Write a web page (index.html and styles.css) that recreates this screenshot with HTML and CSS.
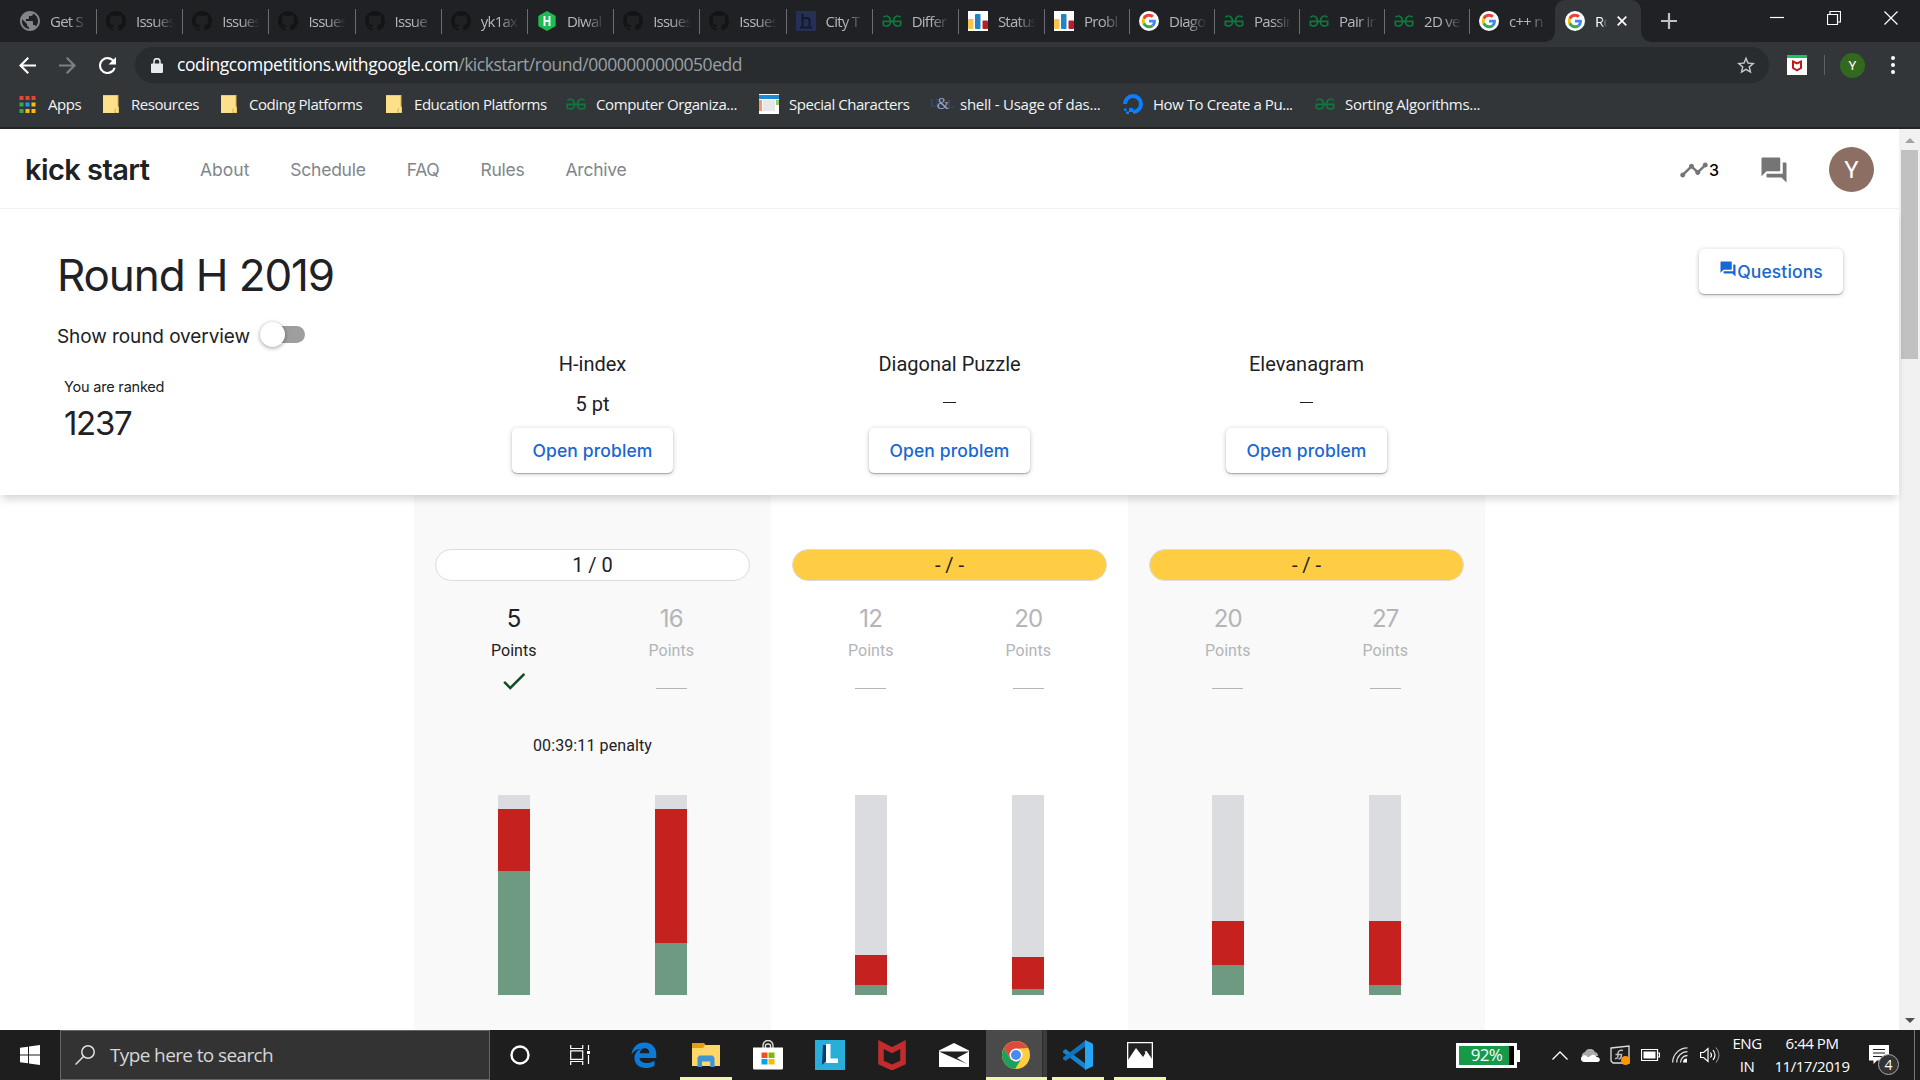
FILE: index.html
```html
<!DOCTYPE html>
<html lang="en">
<head>
<meta charset="utf-8">
<title>Kick Start - Round H 2019</title>
<link rel="stylesheet" href="styles.css">
</head>
<body>
<svg class="defs" aria-hidden="true">
  <symbol id="github" viewBox="0 0 16 16"><path d="M8 0C3.58 0 0 3.58 0 8c0 3.54 2.29 6.53 5.47 7.59.4.07.55-.17.55-.38 0-.19-.01-.82-.01-1.49-2.01.37-2.53-.49-2.69-.94-.09-.23-.48-.94-.82-1.13-.28-.15-.68-.52-.01-.53.63-.01 1.08.58 1.23.82.72 1.21 1.87.87 2.33.66.07-.52.28-.87.51-1.07-1.78-.2-3.64-.89-3.64-3.95 0-.87.31-1.59.82-2.15-.08-.2-.36-1.02.08-2.12 0 0 .67-.21 2.2.82.64-.18 1.32-.27 2-.27s1.36.09 2 .27c1.53-1.04 2.2-.82 2.2-.82.44 1.1.16 1.92.08 2.12.51.56.82 1.27.82 2.15 0 3.07-1.87 3.75-3.65 3.95.29.25.54.73.54 1.48 0 1.07-.01 1.93-.01 2.2 0 .21.15.46.55.38A8.01 8.01 0 0 0 16 8c0-4.42-3.58-8-8-8z" fill="#141414"/></symbol>
  <symbol id="globe" viewBox="2 2 20 20"><path d="M12 2C6.48 2 2 6.48 2 12s4.48 10 10 10 10-4.48 10-10S17.52 2 12 2zm-1 17.93c-3.95-.49-7-3.85-7-7.93 0-.62.08-1.21.21-1.79L9 15v1c0 1.1.9 2 2 2v1.930zm6.900-2.540c-.26-.81-1-1.390-1.900-1.390h-1v-3c0-.55-.45-1-1-1H8v-2h2c.55 0 1-.45 1-1V7h2c1.100 0 2-.9 2-2v-.41c2.930 1.190 5 4.060 5 7.410 0 2.080-.8 3.970-2.100 5.390z" fill="#80868b"/></symbol>
  <symbol id="google" viewBox="0 0 20 20"><circle cx="10" cy="10" r="10" fill="#fff"/><g transform="translate(2.800 2.800) scale(.3)"><path fill="#EA4335" d="M24 9.500c3.540 0 6.710 1.220 9.210 3.600l6.850-6.850C35.900 2.380 30.470 0 24 0 14.620 0 6.510 5.380 2.560 13.220l7.980 6.190C12.430 13.720 17.740 9.500 24 9.500z"/><path fill="#4285F4" d="M46.980 24.550c0-1.570-.15-3.090-.38-4.550H24v9.020h12.940c-.58 2.960-2.260 5.480-4.780 7.180l7.730 6c4.510-4.180 7.090-10.360 7.090-17.650z"/><path fill="#FBBC05" d="M10.530 28.590c-.48-1.450-.76-2.990-.76-4.590s.27-3.140.76-4.590l-7.980-6.190C.92 16.460 0 20.120 0 24c0 3.880.92 7.540 2.560 10.780l7.970-6.190z"/><path fill="#34A853" d="M24 48c6.480 0 11.930-2.130 15.890-5.810l-7.730-6c-2.150 1.450-4.920 2.300-8.160 2.300-6.260 0-11.570-4.220-13.470-9.910l-7.980 6.190C6.510 42.620 14.620 48 24 48z"/></g></symbol>
  <symbol id="gfg" viewBox="0 0 20 20"><g fill="none" stroke="#10763f" stroke-width="1.700"><path d="M18.500 6.500C16.500 4 12 4.500 11.500 9.800s4 6.200 7.200 4.200V10.300H9.800"/><path d="M1.500 6.500C3.500 4 8 4.500 8.500 9.800S4.500 16 1.300 14V10.300h9"/></g></symbol>
  <symbol id="cf" viewBox="0 0 20 20"><path fill="#fff" d="M0 0h20v20H0z"/><rect x="0" y="8" width="5.500" height="10" rx="1" fill="#f4c64e"/><rect x="7" y="3" width="5.500" height="15" rx="1" fill="#2284c6"/><rect x="14.500" y="9.500" width="5.500" height="8.500" rx="1" fill="#b7202a"/></symbol>
  <symbol id="hr" viewBox="0 0 20 20"><path fill="#1ebb52" d="M10 0l8 4.500c.5.300.7.800.7 1.300v8.400c0 .5-.2 1-.7 1.300L10 20l-8-4.500c-.5-.3-.7-.8-.7-1.300V5.800c0-.5.200-1 .7-1.300z"/><path d="M7.500 5v10M12.500 5v10M7.500 10h5" stroke="#fff" stroke-width="1.900" fill="none"/></symbol>
  <symbol id="folder" viewBox="0 0 16 18"><path d="M0 0h15v12h1v6H0z" fill="#ffe08a"/><path d="M0 0h15v12h1v6h-4v-4h1.500" fill="none" stroke="#d9b44f"/></symbol>
  <symbol id="forum" viewBox="0 0 24 24"><path d="M21 6h-2v9H6v2c0 .55.450 1 1 1h11l4 4V7c0-.55-.45-1-1-1zm-4 6V3c0-.55-.45-1-1-1H3c-.55 0-1 .45-1 1v14l4-4h10c.55 0 1-.45 1-1z" fill="currentColor"/></symbol>
</svg>

<header class="tabstrip">
  <div class="tab first"><svg><use href="#globe"/></svg><span>Get S</span></div>
  <div class="tab"><svg><use href="#github"/></svg><span>Issues</span></div>
  <div class="tab"><svg><use href="#github"/></svg><span>Issues</span></div>
  <div class="tab"><svg><use href="#github"/></svg><span>Issues</span></div>
  <div class="tab"><svg><use href="#github"/></svg><span>Issue</span></div>
  <div class="tab"><svg><use href="#github"/></svg><span>yk1ax</span></div>
  <div class="tab"><svg><use href="#hr"/></svg><span>Diwal</span></div>
  <div class="tab"><svg><use href="#github"/></svg><span>Issues</span></div>
  <div class="tab"><svg><use href="#github"/></svg><span>Issues</span></div>
  <div class="tab"><svg viewBox="0 0 20 20"><path fill="#263056" d="M0 0h20v20H0z"/><path d="M6.500 3v12M6.500 9q0-2 3.500-2t3.500 2v6M4 16.500h12" stroke="#12182d" stroke-width="2" fill="none"/></svg><span>City T</span></div>
  <div class="tab"><svg><use href="#gfg"/></svg><span>Differ</span></div>
  <div class="tab"><svg><use href="#cf"/></svg><span>Status</span></div>
  <div class="tab late"><svg><use href="#cf"/></svg><span>Probl</span></div>
  <div class="tab late"><svg><use href="#google"/></svg><span>Diago</span></div>
  <div class="tab late"><svg><use href="#gfg"/></svg><span>Passin</span></div>
  <div class="tab late"><svg><use href="#gfg"/></svg><span>Pair in</span></div>
  <div class="tab late"><svg><use href="#gfg"/></svg><span>2D ve</span></div>
  <div class="tab late last"><svg><use href="#google"/></svg><span>c++ n</span></div>
  <div class="tab active"><svg><use href="#google"/></svg><span>Ro</span><svg class="close" viewBox="0 0 10 10"><path d="M.7.700l8.600 8.600M9.300.700L.7 9.300" stroke="#fff" stroke-width="1.700"/></svg></div>
  <svg class="newtab" viewBox="0 0 16 16"><path d="M8 0v16M0 8h16" stroke="#bdc1c6" stroke-width="2.200"/></svg>
  <div class="winctl">
    <svg viewBox="0 0 14 14"><path d="M0 6.500h14" stroke="#fff" stroke-width="1.200"/></svg>
    <svg viewBox="0 0 14 14"><path d="M.5 3.500h10v10H.5zM3 3.500V.5h10.500V11h-3" stroke="#fff" fill="none" stroke-width="1.200"/></svg>
    <svg viewBox="0 0 14 14"><path d="M.5.500l13 13M13.500.500l-13 13" stroke="#fff" stroke-width="1.200"/></svg>
  </div>
</header>

<div class="toolbar">
  <svg class="nav-ic" viewBox="4 4 16 16"><path fill="#fff" d="M20 11H7.830l5.590-5.590L12 4l-8 8 8 8 1.410-1.410L7.830 13H20z"/></svg>
  <svg class="nav-ic" viewBox="4 4 16 16"><path fill="#7d8083" d="M12 4l-1.410 1.410L16.170 11H4v2h12.170l-5.580 5.590L12 20l8-8z"/></svg>
  <svg class="nav-ic" viewBox="4 4 16 16"><path fill="#fff" d="M17.650 6.350A7.960 7.960 0 0 0 12 4a8 8 0 1 0 7.730 10h-2.080A6 6 0 1 1 12 6c1.660 0 3.140.69 4.220 1.780L13 11h7V4z"/></svg>
  <div class="omnibox">
    <svg class="lock" viewBox="0 0 12 15"><path fill="#e8eaed" d="M1 5.500h10a1 1 0 0 1 1 1V14a1 1 0 0 1-1 1H1a1 1 0 0 1-1-1V6.500a1 1 0 0 1 1-1z"/><path d="M3 6V3.700a3 3 0 0 1 6 0V6" fill="none" stroke="#e8eaed" stroke-width="1.500"/></svg>
    <span class="host">codingcompetitions.withgoogle.com</span><span class="path">/kickstart/round/0000000000050edd</span>
    <svg class="star" viewBox="2 2 20 19"><path fill="#c4c7ca" d="M22 9.240l-7.190-.62L12 2 9.190 8.630 2 9.240l5.460 4.730L5.820 21 12 17.270 18.180 21l-1.630-7.030zM12 15.400l-3.760 2.270 1-4.280-3.320-2.880 4.380-.38L12 6.100l1.710 4.040 4.380.38-3.320 2.880 1 4.280z"/></svg>
  </div>
  <svg class="mcafee-ext" viewBox="0 0 20 20"><path fill="#fff" d="M0 0h20v20H0z"/><path fill="#14c46b" d="M0 0h20v3H0z"/><path d="M6 6.500l4 2 4-2v6.500l-4 2.300L6 13z" fill="none" stroke="#c4161c" stroke-width="2"/></svg>
  <i class="sep"></i>
  <span class="profile">Y</span>
  <svg class="menu" viewBox="0 0 4 18"><g fill="#fff"><circle cx="2" cy="2" r="2"/><circle cx="2" cy="9" r="2"/><circle cx="2" cy="16" r="2"/></g></svg>
</div>

<nav class="bookmarks">
  <a class="b1"><svg class="apps" viewBox="0 0 16 17"><g fill="#ea4335"><path d="M0 0h4v4H0zM6 0h4v4H6zM12 0h4v4h-4z"/></g><path fill="#34a853" d="M0 6.500h4v4H0zM0 13h4v4H0z"/><path fill="#2196f3" d="M6 6.500h4v4H6z"/><path fill="#fbbc05" d="M12 6.500h4v4h-4zM6 13h4v4H6zM12 13h4v4h-4z"/></svg>Apps</a>
  <a class="b2"><svg class="fold"><use href="#folder"/></svg>Resources</a>
  <a class="b3"><svg class="fold"><use href="#folder"/></svg>Coding Platforms</a>
  <a class="b4"><svg class="fold"><use href="#folder"/></svg>Education Platforms</a>
  <a class="b5"><svg><use href="#gfg"/></svg>Computer Organiza...</a>
  <a class="b6"><svg viewBox="0 0 20 20"><path fill="#fff" d="M0 0h20v20H0z"/><path fill="#1e88d2" d="M0 1h20v4H0z"/><path fill="#e8e8e8" d="M4 6h12v11H4z"/><path fill="#f0996a" d="M0 6h3v11H0z"/><path fill="#9cc76b" d="M17 6h3v5h-3z"/></svg>Special Characters</a>
  <a class="b7"><span class="ul"><i>U</i><b>&amp;</b><i>L</i></span>shell - Usage of das...</a>
  <a class="b8"><svg viewBox="0 0 20 20"><path d="M10 18a8 8 0 1 0-8-8" fill="none" stroke="#0a80ff" stroke-width="4"/><path fill="#0a80ff" d="M6 14h4v4H6zM3 17.500h3V20H3zM1 14.500h2.500V17H1z"/></svg>How To Create a Pu...</a>
  <a class="b9"><svg><use href="#gfg"/></svg>Sorting Algorithms...</a>
</nav>

<div class="viewport">
  <main class="page">
    <div class="site-header">
      <span class="brand">kick start</span>
      <nav class="site-nav"><a>About</a><a>Schedule</a><a>FAQ</a><a>Rules</a><a>Archive</a></nav>
      <div class="actions">
        <svg class="ic30" viewBox="0 0 24 24"><path fill="#757575" d="M23 8c0 1.100-.9 2-2 2-.18 0-.35-.02-.51-.07l-3.560 3.550c.05.160.07.340.07.520 0 1.100-.9 2-2 2s-2-.9-2-2c0-.18.020-.36.070-.52l-2.550-2.550c-.16.050-.34.070-.52.070s-.36-.02-.52-.07l-4.550 4.560c.05.160.07.330.07.510 0 1.100-.9 2-2 2s-2-.9-2-2 .9-2 2-2c.18 0 .35.020.51.070l4.560-4.550C8.020 9.360 8 9.180 8 9c0-1.100.9-2 2-2s2 .9 2 2c0 .18-.02.360-.07.520l2.550 2.550c.16-.05.340-.07.520-.07s.36.020.52.070l3.550-3.560C19.020 8.350 19 8.180 19 8c0-1.100.9-2 2-2s2 .9 2 2z"/></svg>
        <span class="count">3</span>
        <svg class="ic30 chat"><use href="#forum"/></svg>
        <span class="avatar">Y</span>
      </div>
    </div>
    <section class="round">
      <div class="round-info">
        <h1>Round H 2019</h1>
        <div class="overview">Show round overview<span class="toggle"><i></i></span></div>
        <div class="rank-label">You are ranked</div>
        <div class="rank">1237</div>
      </div>
      <div class="heads">
        <div class="head"><span>H-index</span><span>5 pt</span><button class="btn">Open problem</button></div>
        <div class="head"><span>Diagonal Puzzle</span><span class="dash"><i></i></span><button class="btn">Open problem</button></div>
        <div class="head"><span>Elevanagram</span><span class="dash"><i></i></span><button class="btn">Open problem</button></div>
      </div>
      <button class="btn questions"><svg><use href="#forum"/></svg>Questions</button>
    </section>
    <section class="board">
      <article class="col shaded">
        <div class="pill">1 / 0</div>
        <div class="sets">
          <div class="set solved"><b>5</b><span>Points</span><svg viewBox="0 0 24 24"><path fill="#0d4f1f" d="M9 16.170L4.830 12l-1.420 1.410L9 19 21 7l-1.410-1.410z"/></svg></div>
          <div class="set"><b>16</b><span>Points</span><i></i></div>
        </div>
        <div class="penalty">00:39:11 penalty</div>
        <div class="bars">
          <div class="bar"><i class="bad" style="height:31%"></i><i class="good" style="height:62%"></i></div>
          <div class="bar"><i class="bad" style="height:67%"></i><i class="good" style="height:26%"></i></div>
        </div>
      </article>
      <article class="col">
        <div class="pill pending">- / -</div>
        <div class="sets">
          <div class="set"><b>12</b><span>Points</span><i></i></div>
          <div class="set"><b>20</b><span>Points</span><i></i></div>
        </div>
        <div class="penalty"></div>
        <div class="bars">
          <div class="bar"><i class="bad" style="height:15%"></i><i class="good" style="height:5%"></i></div>
          <div class="bar"><i class="bad" style="height:16%"></i><i class="good" style="height:3%"></i></div>
        </div>
      </article>
      <article class="col shaded">
        <div class="pill pending">- / -</div>
        <div class="sets">
          <div class="set"><b>20</b><span>Points</span><i></i></div>
          <div class="set"><b>27</b><span>Points</span><i></i></div>
        </div>
        <div class="penalty"></div>
        <div class="bars">
          <div class="bar"><i class="bad" style="height:22%"></i><i class="good" style="height:15%"></i></div>
          <div class="bar"><i class="bad" style="height:32%"></i><i class="good" style="height:5%"></i></div>
        </div>
      </article>
    </section>
  </main>
  <div class="scrollbar">
    <svg viewBox="0 0 10 5"><path fill="#a3a3a3" d="M5 0l5 5H0z"/></svg>
    <div class="thumb"></div>
    <svg class="down" viewBox="0 0 10 5"><path fill="#505050" d="M0 0h10L5 5z"/></svg>
  </div>
</div>

<footer class="taskbar">
  <div class="start"><svg width="20" height="20" viewBox="0 0 20 20"><path fill="#fff" d="M0 2.800l8-1.100v7.800H0zM9 1.500L20 0v9.500H9zM0 10.500h8v7.800l-8-1.100zM9 10.500h11V20L9 18.500z"/></svg></div>
  <div class="search"><svg width="20" height="20" viewBox="0 0 20 20"><circle cx="13" cy="7" r="6.200" fill="none" stroke="#e0e0e0" stroke-width="1.500"/><path d="M8.700 11.300L.6 19.500" stroke="#e0e0e0" stroke-width="1.500"/></svg>Type here to search</div>
  <div class="task sys"><svg width="20" height="20" viewBox="0 0 20 20"><circle cx="10" cy="10" r="8.500" fill="none" stroke="#fff" stroke-width="2.400"/></svg></div>
  <div class="task sys"><svg width="20" height="20" viewBox="0 0 20 20"><path d="M.7 0v3.500h12V0M.7 5.800h12v8.500H.7zM.7 20v-3.500h12V20M18.500 0v5M18.500 10v9" fill="none" stroke="#fff" stroke-width="1.200"/><path fill="#fff" d="M17 6h3v3h-3z"/></svg></div>
  <div class="task edge"><svg width="26" height="26" viewBox="0 0 26 26"><path fill="#0a7bdc" d="M.5 12.500C1.500 5 6.500.5 13.500.500 21 .5 25.300 6 25.300 12.500V16H8.500c.3 3.500 3.500 5 7 5 3 0 5.500-.8 8-2.300v5c-2.500 1.500-5.500 2.300-9 2.300-6.500 0-11-4-11-10 0-4.500 2.800-8 6.700-9.300C5 7 2.200 9.500.5 12.500zM8.600 11.300h9.800c0-3-1.600-5-4.600-5-2.800 0-4.800 2-5.200 5z"/></svg></div>
  <div class="task open"><svg width="28" height="24" viewBox="0 0 28 24"><path fill="#e0a011" d="M0 0h12l2 2.500V6H0z"/><path fill="#ffd768" d="M0 5h11l2-3h15v21H0z"/><path fill="#3e95d6" d="M5.500 24v-9.500l2-2h13l2 2V24h-4.300v-5.500H10V24z"/></svg></div>
  <div class="task"><svg width="30" height="30" viewBox="0 0 30 30"><path d="M10 9V5.500a5 5 0 0 1 10 0V9M12.500 9V5a3.500 3.500 0 0 1 5 0v4" fill="none" stroke="#ddd" stroke-width="1.400"/><path fill="#fff" d="M0 7.500h30V28a1.500 1.500 0 0 1-1.500 1.500h-27A1.500 1.500 0 0 1 0 28z"/><path fill="#f25022" d="M8.500 12.500h6v5.500h-6z"/><path fill="#7fba00" d="M15.500 12.500h6v5.500h-6z"/><path fill="#00a4ef" d="M8.500 19h6v5.500h-6z"/><path fill="#ffb900" d="M15.500 19h6v5.500h-6z"/></svg></div>
  <div class="task"><svg width="30" height="30" viewBox="0 0 30 30"><path fill="#27aed9" d="M0 0h30v30H0z"/><path fill="#0b3a6b" d="M8 5h5v14L7 25z"/><path fill="#fff" d="M11 4h4.500v14.500H23V23H11z"/></svg></div>
  <div class="task"><svg width="28" height="30" viewBox="0 0 28 30"><path d="M3 4.500l11 5.700L25 4.500v18L14 27.500 3 22.500z" fill="none" stroke="#c22c2e" stroke-width="5.500"/></svg></div>
  <div class="task"><svg width="30" height="26" viewBox="0 0 30 26"><path fill="#fff" d="M0 8.500L15 1l15 7.500V25H0z"/><path fill="#1e1e1e" d="M0 9.500h30L18 16l10 6-18-8z"/></svg></div>
  <div class="task open current"><svg width="28" height="28" viewBox="0 0 28 28"><circle cx="14" cy="14" r="14" fill="#ffcd40"/><path fill="#dd4b3e" d="M1.900 7A14 14 0 0 1 26.100 7L14 7.800 8 17.500z"/><path fill="#1ba05e" d="M1.900 7A14 14 0 0 0 13 28l6.500-10.500L14 20.300l-6-2.800z"/><circle cx="14" cy="14" r="6.500" fill="#fff"/><circle cx="14" cy="14" r="5" fill="#4a8af4"/></svg></div>
  <div class="task open"><svg width="30" height="30" viewBox="0 0 30 30"><path fill="#1584cf" d="M0 11l2.500-2L23 24v6L0 12.500z"/><path fill="#0f74bd" d="M0 19l2.500 2L23 6V0L0 17.500z"/><path fill="#27a5f2" d="M22 0l7 3.200c.6.300 1 .8 1 1.500v20.600c0 .7-.4 1.200-1 1.500L22 30z"/></svg></div>
  <div class="task open"><svg width="26" height="26" viewBox="0 0 26 26"><path d="M.6.600h24.800v24.800H.6z" fill="#222" stroke="#fff" stroke-width="1.400"/><path fill="#fff" d="M1 18L9 6l7 9 2.500-4-1-1.500 2-.5 5.500 8v8H1z"/></svg></div>

  <div class="tray">
    <div class="power"><span>92%</span></div>
    <svg class="t-up" viewBox="0 0 16 9"><path d="M.5 8.500L8 1l7.500 7.500" fill="none" stroke="#fff" stroke-width="1.300"/></svg>
    <svg class="t-cloud" viewBox="0 0 20 13"><path fill="#a9a9a9" d="M2 8a4 4 0 0 1 3-5 5.500 5.500 0 0 1 10 0 4 4 0 0 1 3 4z"/><path fill="#fff" d="M3.500 13a3.300 3.300 0 0 1-.5-6.300c2-1 4 0 5 1.300l4-2c2-.6 4 .5 4.500 2 4 0 4.500 4.500 1 5z"/></svg>
    <svg class="t-box" viewBox="0 0 20 20"><path d="M1 3l18-2v17H3L1 16z" fill="none" stroke="#ddd" stroke-width="1.300"/><path d="M13 5.500Q8.500 4.500 8 8v2.500q0 3.500-3 3M5.500 9.500h6q0 4-3 4.500" fill="none" stroke="#bbb" stroke-width="1.500"/><circle cx="15.500" cy="15.500" r="4.500" fill="#ff9800"/></svg>
    <svg class="t-bat" viewBox="0 0 19 12"><path d="M.5.500h16v11H.5zM16.500 4h2v4h-2" fill="none" stroke="#fff" stroke-width="1.200"/><path fill="#fff" d="M2.500 2.500h12v7h-12z"/></svg>
    <svg class="t-wifi" viewBox="0 0 16 16"><g fill="none" stroke="#ddd" stroke-width="1.300"><path d="M.7 15.500A14.800 14.800 0 0 1 15.500.800M4.700 15.500A10.800 10.800 0 0 1 15.500 4.700M8.500 15.500a7 7 0 0 1 7-7"/></g><path fill="#fff" d="M11 15.500a4 4 0 0 1 4-4v4z"/></svg>
    <svg class="t-vol" viewBox="0 0 20 16"><g fill="none" stroke="#fff" stroke-width="1.200"><path d="M.6 5.500h3L8 1.500v13l-4.400-4h-3zM10.500 5.500q2 2.500 0 5M13 3q4 5 0 10"/><path stroke="#888" d="M16 .5q6 7.500 0 15"/></g></svg>
    <div class="lang"><span>ENG</span><span>IN</span></div>
    <div class="clock"><span>6:44 PM</span><span>11/17/2019</span></div>
    <div class="notice"><svg viewBox="0 0 20 20"><path fill="#fff" d="M0 0h20v15.500H8L4.500 19v-3.500H0z"/><path d="M4 4.500h12M4 8h12M4 11.500h9" stroke="#1e1e1e" stroke-width="1.200"/></svg><b>4</b></div>
    <i class="peek"></i>
  </div>
</footer>
</body>
</html>
```
FILE: styles.css
```css
* { box-sizing: border-box; }
body {
  margin: 0;
  width: 1920px;
  height: 1080px;
  overflow: hidden;
  display: flex;
  flex-direction: column;
  font-family: "Open Sans", sans-serif;
  background: #fff;
}
svg { display: block; flex: none; }
i { font-style: normal; }
.defs { position: absolute; width: 0; height: 0; }

/* tab strip */
.tabstrip {
  height: 42px;
  flex: none;
  display: flex;
  align-items: center;
  background: #202124;
  color: #b4b8bc;
  font-size: 15px;
  letter-spacing: -.75px;
}
.tab {
  width: 86.2px;
  height: 25px;
  flex: none;
  display: flex;
  align-items: center;
  gap: 10px;
  padding-left: 9px;
  border-right: 1px solid #6a6d71;
}
.tab.late { width: 85px; }
.tab.first { width: 97px; padding-left: 20px; }
.tab.last { border-right-color: transparent; }
.tab svg { width: 20px; height: 20px; }
.tab span {
  flex: none;
  width: 42px;
  margin-top: -1px;
  white-space: nowrap;
  mask-image: linear-gradient(90deg, #000 45%, transparent 90%);
}
.tab.active {
  position: relative;
  height: 42px;
  width: 86px;
  padding-left: 10px;
  border: 0;
  border-radius: 10px 10px 0 0;
  background: #323639;
  color: #fff;
}
.tab.active::before, .tab.active::after {
  content: "";
  position: absolute;
  bottom: 0;
  width: 10px;
  height: 10px;
}
.tab.active::before { left: -10px; background: radial-gradient(circle at 0 0, transparent 9.5px, #323639 10px); }
.tab.active::after { right: -10px; background: radial-gradient(circle at 100% 0, transparent 9.5px, #323639 10px); }
.tab.active span { width: 12px; mask-image: linear-gradient(90deg, #000 50%, transparent); }
.tab.active .close { width: 10px; height: 10px; }
.newtab { width: 16px; height: 16px; margin-left: 20px; }
.winctl { margin: 0 22px 6px auto; display: flex; gap: 43px; }
.winctl svg { width: 14px; height: 14px; }

/* toolbar */
.toolbar {
  height: 46px;
  flex: none;
  display: flex;
  align-items: center;
  padding-left: 19px;
  background: #323639;
}
.nav-ic { width: 17px; height: 17px; margin-right: 23px; }
.omnibox {
  width: 1634px;
  height: 36px;
  margin-left: -4px;
  display: flex;
  align-items: center;
  padding: 0 14px 0 16px;
  border-radius: 18px;
  background: #282c2f;
  font-size: 17.5px;
  letter-spacing: -.4px;
}
.lock { width: 12px; height: 15px; margin-right: 14px; }
.host, .path { padding-bottom: 2px; }
.host { color: #fff; }
.path { color: #9aa0a6; letter-spacing: -.47px; }
.star { width: 18px; height: 18px; margin-left: auto; }
.mcafee-ext { width: 20px; height: 20px; margin-left: 18px; }
.sep { width: 1px; height: 20px; margin-left: 17px; background: #5f6368; }
.profile {
  width: 25px;
  height: 25px;
  margin-left: 15px;
  border-radius: 50%;
  background: #33691e;
  color: #fff;
  font: 13px/25px Roboto, sans-serif;
  text-align: center;
}
.menu { width: 4px; height: 18px; margin-left: 26px; }

/* bookmarks */
.bookmarks {
  height: 41px;
  flex: none;
  display: flex;
  padding: 0 0 7px 19px;
  border-bottom: 2px solid #222528;
  background: #323639;
  color: #f1f3f4;
  font-size: 15px;
  letter-spacing: -.45px;
  white-space: nowrap;
}
.bookmarks a { display: flex; align-items: center; gap: 10px; flex: none; }
.bookmarks svg { width: 20px; height: 20px; }
.bookmarks .apps { width: 17px; height: 17px; margin-right: 2px; }
.bookmarks .fold { width: 16px; height: 18px; margin-right: 2px; }
.b1 { width: 84px; }
.b2 { width: 118px; }
.b3 { width: 165px; }
.b4 { width: 180px; }
.b5 { width: 193px; letter-spacing: -.4px; }
.b6 { width: 171px; }
.b7 { width: 193px; letter-spacing: -.25px; }
.b8 { width: 192px; }
.b9 { letter-spacing: -.3px; }
.ul { width: 20px; display: flex; font-family: "Liberation Serif", serif; letter-spacing: -2px; color: #34507c; font-size: 12px; }
.ul b { font-weight: 400; font-size: 16px; color: #93a4c8; line-height: 16px; }
.ul i:last-child { align-self: flex-end; }

/* page */
.viewport { height: 901px; flex: none; display: flex; }
.page {
  width: 1899px;
  display: flex;
  flex-direction: column;
  color: #202124;
  font-family: Inter, sans-serif;
}
.site-header {
  height: 80px;
  flex: none;
  display: flex;
  align-items: center;
  padding: 2px 25px 0 25px;
  border-bottom: 1px solid #f1f1f1;
}
.brand { width: 175px; font-size: 29px; font-weight: 600; letter-spacing: -.55px; }
.site-nav { display: flex; gap: 41px; font-size: 17.5px; letter-spacing: -.25px; }
.site-nav a { color: #80868b; }
.site-nav a:first-child { letter-spacing: 0; }
.actions { margin-left: auto; display: flex; align-items: center; }
.ic30 { width: 30px; height: 30px; }
.count { width: 10px; font-size: 16px; font-weight: 500; color: #000; }
.chat { margin: 0 40px; color: #757575; }
.avatar {
  width: 45px;
  height: 45px;
  border-radius: 50%;
  background: #8d6e63;
  color: #fff;
  font: 24px/46px Roboto, sans-serif;
  text-align: center;
}
.round {
  position: relative;
  z-index: 1;
  height: 286px;
  flex: none;
  display: flex;
  background: #fff;
  box-shadow: 0 6px 8px -2px rgba(0, 0, 0, .17);
}
.round-info { width: 414px; padding: 39px 0 0 57px; }
h1 { margin: 0; font-size: 44px; line-height: 54px; font-weight: 400; letter-spacing: -1.1px; }
.overview { display: flex; align-items: center; height: 24px; margin-top: 22px; font-size: 19px; letter-spacing: -.08px; white-space: nowrap; }
.toggle { width: 39px; height: 17px; margin-left: 16px; margin-bottom: 4px; display: flex; align-items: center; border-radius: 9px; background: #9e9e9e; }
.toggle i { width: 25px; height: 25px; margin-left: -6px; flex: none; border-radius: 50%; background: #fff; box-shadow: 0 1px 4px rgba(0, 0, 0, .4); }
.rank-label { margin: 29px 0 0 7px; font-size: 14.500px; line-height: 20px; letter-spacing: -.2px; }
.rank { margin: 6px 0 0 7px; font-size: 33px; line-height: 40px; letter-spacing: -1.300px; }
.heads { display: flex; padding-top: 136px; }
.head { width: 357px; display: flex; flex-direction: column; align-items: center; font: 20px/39px Roboto, sans-serif; }
.head span { height: 39.500px; }
.head .btn { margin-top: 4px; }
.dash i { display: block; width: 13px; height: 1.500px; margin-top: 17px; background: #202124; }
.btn {
  width: 161px;
  height: 45px;
  padding: 0;
  border: 0;
  border-radius: 5px;
  background: #fff;
  box-shadow: 0 1px 1px rgba(0, 0, 0, .25), 0 1px 5px rgba(0, 0, 0, .22);
  color: #1967d2;
  font: 500 17.500px Inter, sans-serif;
  letter-spacing: .12px;
}
.questions { width: 144px; margin: 40px 56px 0 auto; display: flex; align-items: center; justify-content: center; }
.questions svg { width: 18px; height: 18px; margin-bottom: 6px; }

/* score columns */
.board { flex: 1; display: flex; padding-left: 414px; }
.col { width: 357px; padding: 54px 21px 0; display: flex; flex-direction: column; }
.shaded { background: #f9f9f9; }
.pill {
  height: 32px;
  flex: none;
  border: 1px solid #dadce0;
  border-radius: 16px;
  background: #fff;
  font: 20px/31px Roboto, sans-serif;
  text-align: center;
}
.pending { background: #ffcd43; }
.sets { display: flex; height: 146px; padding-top: 21px; }
.set { flex: 1; display: flex; flex-direction: column; align-items: center; color: #b3b5b8; }
.set b { font-size: 24px; line-height: 34px; font-weight: 400; letter-spacing: -.8px; }
.set span { margin-top: 5px; font: 16px/20px Roboto, sans-serif; }
.set i { width: 31px; height: 1px; margin-top: 27px; background: #b3b5b8; }
.solved { color: #202124; }
.solved svg { width: 30px; height: 30px; margin-top: 5px; }
.penalty { height: 68px; padding-top: 1px; font: 16px/36px Roboto, sans-serif; letter-spacing: .1px; text-align: center; }
.bars { display: flex; justify-content: space-around; }
.bar { width: 32px; height: 200px; display: flex; flex-direction: column; justify-content: flex-end; background: #dadce0; }
.bad { background: #c5221f; }
.good { background: #6f9a82; }

/* scrollbar */
.scrollbar { width: 21px; display: flex; flex-direction: column; align-items: center; padding: 9px 0 7px; background: #f1f1f1; }
.scrollbar svg { width: 10px; height: 5px; }
.thumb { width: 17px; height: 209px; margin-top: 7px; background: #c1c1c1; }
.down { margin-top: auto; }

/* taskbar */
.taskbar { height: 50px; flex: none; display: flex; background: #1e1e1e; color: #fff; }
.start { width: 60px; display: flex; align-items: center; justify-content: center; }
.search {
  width: 430px;
  display: flex;
  align-items: center;
  gap: 15px;
  padding-left: 14px;
  border: 1px solid #666;
  background: #333;
  color: #d6d6d6;
  font-size: 19px;
  letter-spacing: -.62px;
}
.task { width: 52px; margin: 0 5px; display: flex; align-items: center; justify-content: center; }
.task.sys { width: 60px; margin: 0; }
.task.edge { margin-left: 8px; }
.open { border-bottom: 3px solid #eef7ac; padding-top: 3px; }
.task.current { width: 61px; margin: 0 0 0 1px; padding-right: 1px; background: linear-gradient(90deg, #4a4a4a 56px, #1e1e1e 56px, #3b3b3b 57px); }
.tray { margin-left: auto; display: flex; align-items: center; font-size: 15px; }
.power {
  position: relative;
  width: 61px;
  height: 25px;
  border: 3px solid #fff;
  background: linear-gradient(90deg, #169a4a 50px, #000 50px);
  font-size: 17px;
  line-height: 18px;
  letter-spacing: -.7px;
  text-align: center;
}
.power::after { content: ""; position: absolute; right: -6px; top: 4px; width: 3px; height: 12px; background: #fff; }
.t-up { width: 16px; height: 9px; margin-left: 35px; }
.t-cloud { width: 20px; height: 13px; margin-left: 12px; }
.t-box { width: 20px; height: 20px; margin-left: 10px; }
.t-bat { width: 19px; height: 12px; margin-left: 11px; }
.t-wifi { width: 16px; height: 16px; margin-left: 12px; }
.t-vol { width: 20px; height: 16px; margin-left: 12px; }
.lang, .clock { display: flex; flex-direction: column; align-items: center; line-height: 23px; letter-spacing: -.45px; }
.lang { width: 54px; }
.clock { width: 76px; }
.notice { position: relative; width: 20px; height: 20px; margin-left: 19px; }
.notice b {
  position: absolute;
  left: 9px;
  top: 9px;
  width: 21px;
  height: 21px;
  border: 1px solid #aaa;
  border-radius: 50%;
  background: #333;
  font: 14px/19px "Open Sans", sans-serif;
  text-align: center;
}
.peek { width: 1px; height: 50px; margin: 0 5px 0 25px; background: #777; }
```
